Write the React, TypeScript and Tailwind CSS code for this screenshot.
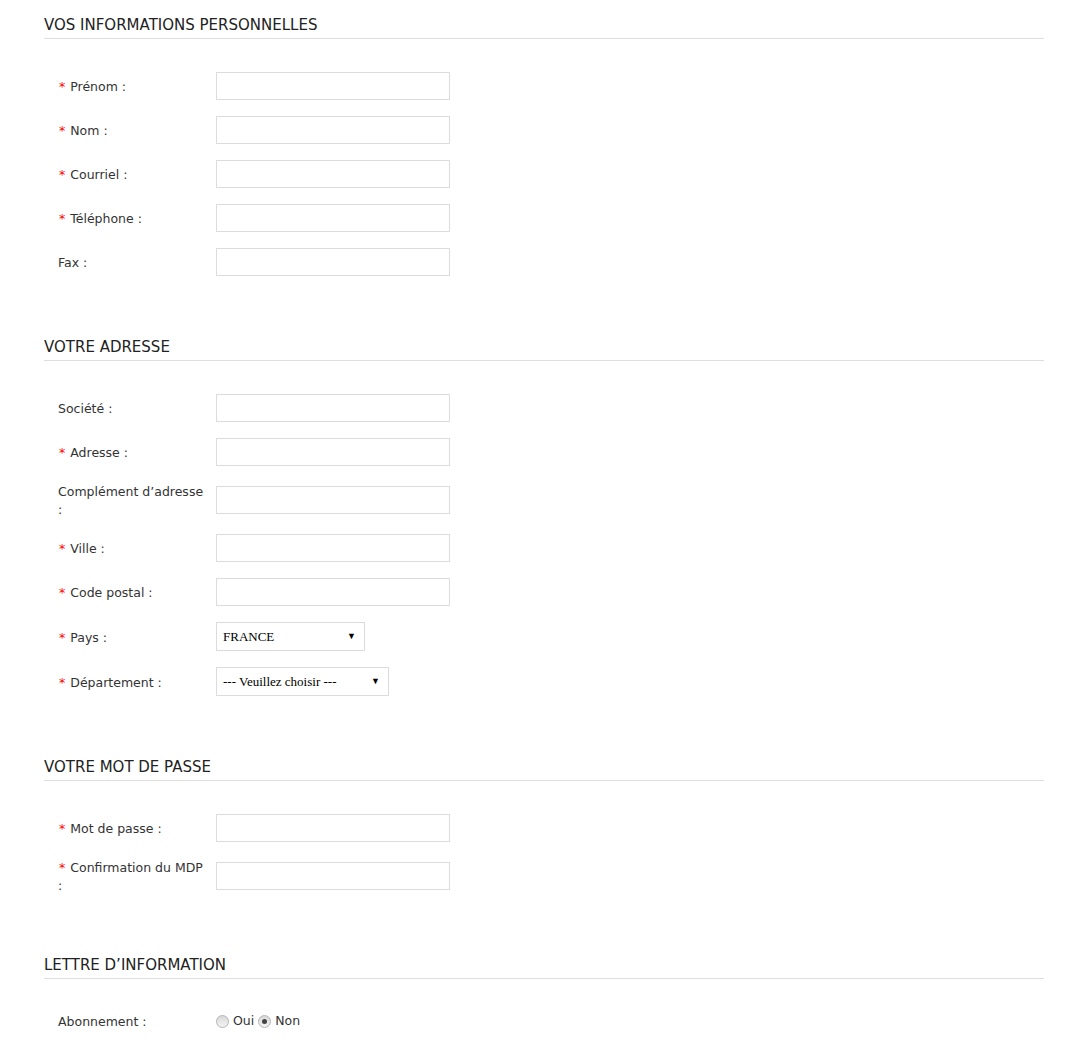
import React from "react";

type Field = {
  label: string;
  required?: boolean;
  kind?: "text" | "select";
  value?: string;
  width?: string;
};

const Label = ({ label, required }: { label: string; required?: boolean }) => (
  <label className="w-[148px] mr-[10px] shrink-0 leading-[18px] text-[#333] translate-y-[1px]">
    {required && <span className="text-[#ff0000] mr-[5px] ml-[1px]">*</span>}
    {label}
  </label>
);

const Select = ({ value, width }: { value: string; width: string }) => (
  <div
    className={`${width} h-[29px] border border-[#dcdcdc] bg-white flex items-center justify-between pl-[6px] pr-[8px] text-[13px] text-black`}
    style={{ fontFamily: '"Liberation Serif", "Times New Roman", serif' }}
  >
    <span>{value}</span>
    <span className="text-[9px] leading-none">▼</span>
  </div>
);

const Row = ({ field }: { field: Field }) => (
  <div className="flex items-center">
    <Label label={field.label} required={field.required} />
    {field.kind === "select" ? (
      <Select value={field.value ?? ""} width={field.width ?? "w-[149px]"} />
    ) : (
      <input
        type="text"
        className="w-[234px] h-[28px] border border-[#dcdcdc] bg-white px-2 outline-none"
      />
    )}
  </div>
);

const Section = ({ title, children, first }: { title: string; children: React.ReactNode; first?: boolean }) => (
  <section className={first ? "pt-[15px]" : "pt-[61px]"}>
    <h2 className="text-[15px] leading-[20px] text-[#222] pb-[3px] border-b border-[#dedede] uppercase">
      {title}
    </h2>
    <div className="mt-[33px] pl-[14px] flex flex-col gap-[16px]">{children}</div>
  </section>
);

const Radio = ({ checked }: { checked?: boolean }) => (
  <span className="w-[13px] h-[13px] rounded-full border border-[#b4b4b4] bg-gradient-to-b from-[#d8d8d8] to-[#f4f4f4] flex items-center justify-center">
    {checked && <span className="w-[5px] h-[5px] rounded-full bg-[#444]" />}
  </span>
);

const personal: Field[] = [
  { label: "Prénom :", required: true },
  { label: "Nom :", required: true },
  { label: "Courriel :", required: true },
  { label: "Téléphone :", required: true },
  { label: "Fax :" },
];

const address: Field[] = [
  { label: "Société :" },
  { label: "Adresse :", required: true },
  { label: "Complément d’adresse :" },
  { label: "Ville :", required: true },
  { label: "Code postal :", required: true },
  { label: "Pays :", required: true, kind: "select", value: "FRANCE", width: "w-[149px]" },
  { label: "Département :", required: true, kind: "select", value: "--- Veuillez choisir ---", width: "w-[173px]" },
];

const password: Field[] = [
  { label: "Mot de passe :", required: true },
  { label: "Confirmation du MDP :", required: true },
];

const App = () => {
  return (
    <div
      className="min-h-screen bg-white text-[12.5px] text-[#333]"
      style={{ fontFamily: '"DejaVu Sans", Verdana, sans-serif' }}
    >
      <div className="ml-[44px] w-[1000px] pb-[20px]">
        <Section title="Vos informations personnelles" first>
          {personal.map((f) => (
            <Row key={f.label} field={f} />
          ))}
        </Section>

        <Section title="Votre adresse">
          {address.map((f) => (
            <Row key={f.label} field={f} />
          ))}
        </Section>

        <Section title="Votre mot de passe">
          {password.map((f) => (
            <Row key={f.label} field={f} />
          ))}
        </Section>

        <Section title="Lettre d’information">
          <div className="flex items-center">
            <Label label="Abonnement :" />
            <div className="flex items-center text-[#333]">
              <Radio />
              <span className="ml-[4px] mr-[4px]">Oui</span>
              <Radio checked />
              <span className="ml-[4px]">Non</span>
            </div>
          </div>
        </Section>
      </div>
    </div>
  );
};

export default App;
